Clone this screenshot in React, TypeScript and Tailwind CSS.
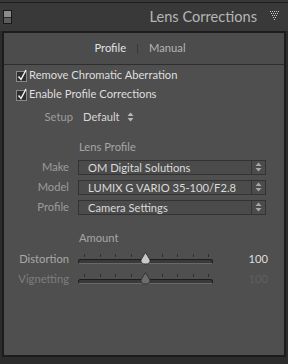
const font = "font-['Lato','Noto_Sans',sans-serif]";

function UpDown({ className = '' }: { className?: string }) {
  return (
    <svg width="7" height="10" viewBox="0 0 7 10" className={className}>
      <path d="M3.5 0.5 L6.5 4 L0.5 4 Z" fill="currentColor" />
      <path d="M3.5 9.5 L6.5 6 L0.5 6 Z" fill="currentColor" />
    </svg>
  );
}

function DotTriangle() {
  const dots: { x: number; y: number }[] = [];
  for (let r = 0; r < 5; r++) {
    for (let c = 0; c < 5 - r; c++) {
      dots.push({ x: r + c * 2, y: r * 2 });
    }
  }
  return (
    <svg width="11" height="10" viewBox="0 0 11 10">
      {dots.map((d, i) => (
        <rect key={i} x={d.x} y={d.y} width="1" height="1" fill="#c8c8c8" />
      ))}
    </svg>
  );
}

function Check({ label }: { label: string }) {
  return (
    <div className="flex h-[19px] items-center pl-[8px]">
      <svg width="16" height="15" viewBox="0 0 16 15" className="shrink-0">
        <rect x="4.5" y="3.5" width="10" height="10" fill="#2e2e2e" stroke="#8a8a8a" />
        <path d="M6.5 8.5 L9 11.5 L14 2" fill="none" stroke="#efefef" strokeWidth="1.5" />
      </svg>
      <span className="ml-[1px] text-[11.2px] text-[#dedede]">{label}</span>
    </div>
  );
}

function Select({ label, value }: { label: string; value: string }) {
  return (
    <div className="flex h-[20px] items-center">
      <span className="w-[65px] text-right text-[11.2px] text-[#9c9c9c]">{label}</span>
      <div className="ml-[9px] flex h-[15px] w-[188px] items-stretch border border-[#333] bg-[#4b4b4b]">
        <span className="flex-1 pl-[9px] text-[11.2px] leading-[13px] text-[#dadada]">{value}</span>
        <span className="flex w-[14px] items-center justify-center border-l border-[#333] text-[#a6a6a6]">
          <UpDown />
        </span>
      </div>
    </div>
  );
}

function Slider({ label, value, dim }: { label: string; value: string; dim?: boolean }) {
  const ticks = Array.from({ length: 9 }, (_, i) => 6 + i * 15.5);
  return (
    <div className="flex h-[20px] items-center">
      <span className={`w-[65px] text-right text-[11.2px] ${dim ? 'text-[#7e7e7e]' : 'text-[#a8a8a8]'}`}>{label}</span>
      <div className="relative ml-[9px] h-[20px] w-[135px]">
        {ticks.map((t) => (
          <div key={t} className="absolute top-[5px] h-[3px] w-px bg-[#2e2e2e]" style={{ left: t }} />
        ))}
        <div className="absolute left-0 right-0 top-[10px] h-[5px] rounded-full border border-[#1e1e1e] border-b-[#686868] bg-[#3a3a3a]" />
        <svg width="11" height="13" viewBox="0 0 11 13" className="absolute left-[62px] top-[3px]">
          <path
            d="M5.5 0.5 L10 8 Q10.5 12 5.5 12 Q0.5 12 1 8 Z"
            fill={dim ? '#6c6c6c' : '#c9c9c9'}
            stroke="#2a2a2a"
            strokeWidth="0.8"
          />
        </svg>
      </div>
      <span className={`w-[55px] text-right text-[11.2px] ${dim ? 'text-[#5f5f5f]' : 'text-[#dedede]'}`}>{value}</span>
    </div>
  );
}

export default function App() {
  return (
    <div className={`${font} flex h-[364px] w-[288px] flex-col overflow-hidden bg-[#2c2c2c]`}>
      <div className="h-[3px] border-b border-[#1e1e1e] bg-[#383838]" />
      {/* header */}
      <div className="flex h-[28px] items-center bg-[#393939] pl-[3px] pr-[7px]">
        <div className="flex h-[14px] w-[9px] flex-col border border-[#1a1a1a]">
          <div className="h-[6px] bg-[#8c8c8c]" />
          <div className="h-px bg-[#2a2a2a]" />
          <div className="flex-1 bg-[#5c5c5c]" />
        </div>
        <span className="ml-auto text-[14.6px] leading-none text-[#b5b5b5]">Lens Corrections</span>
        <span className="ml-[13px] mt-[-2px] flex">
          <DotTriangle />
        </span>
      </div>
      {/* panel */}
      <div className="mx-[2px] flex h-[326px] flex-col border-2 border-[#1c1c1c] bg-[#4f4f4f]">
        <div className="flex h-[32px] items-center justify-center border-b border-[#2e2e2e] bg-[#4c4c4c] pr-[8px] text-[11.2px]">
          <span className="text-[#e2e2e2]">Profile</span>
          <span className="mx-[11px] h-[10px] w-px bg-[#383838]" />
          <span className="text-[#b4b4b4]">Manual</span>
        </div>
        <div className="flex flex-col pt-px">
          <Check label="Remove Chromatic Aberration" />
          <Check label="Enable Profile Corrections" />
          <div className="mt-[3px] flex h-[20px] items-center text-[11.2px]">
            <span className="w-[69px] text-right text-[#9e9e9e]">Setup</span>
            <span className="ml-[10px] text-[#d6d6d6]">Default</span>
            <UpDown className="ml-[7px] text-[#b8b8b8]" />
          </div>
          <div className="mt-[12px] h-[16px] pl-[75px] text-[11.2px] leading-[16px] text-[#a6a6a6]">Lens Profile</div>
          <div className="mt-[2px] flex flex-col">
            <Select label="Make" value="OM Digital Solutions" />
            <Select label="Model" value="LUMIX G VARIO 35-100/F2.8" />
            <Select label="Profile" value="Camera Settings" />
          </div>
          <div className="mt-[13px] h-[16px] pl-[75px] text-[11.2px] leading-[16px] text-[#a6a6a6]">Amount</div>
          <div className="mt-[3px] flex flex-col">
            <Slider label="Distortion" value="100" />
            <Slider label="Vignetting" value="100" dim />
          </div>
        </div>
      </div>
    </div>
  );
}
